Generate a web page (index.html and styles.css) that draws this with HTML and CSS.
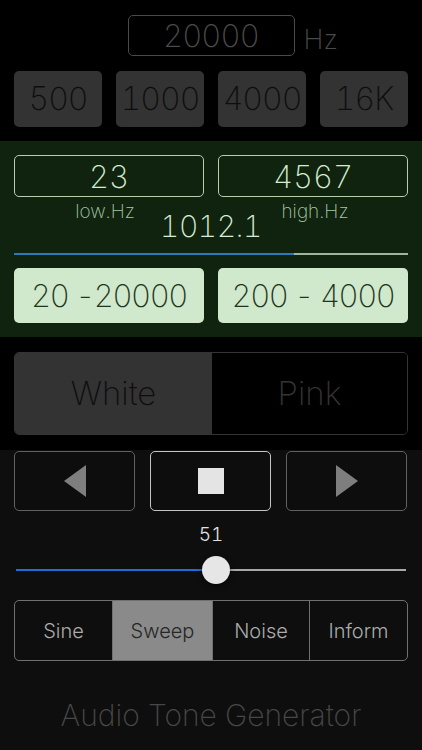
FILE: index.html
```html
<!DOCTYPE html>
<html>
<head>
<meta charset="utf-8">
<link rel="stylesheet" href="styles.css">
</head>
<body>
<div class="app">
  <section class="top">
    <div class="freq-row">
      <div class="freq-box">20000</div>
      <div class="hz">Hz</div>
    </div>
    <div class="presets">
      <div class="preset">500</div>
      <div class="preset">1000</div>
      <div class="preset">4000</div>
      <div class="preset">16K</div>
    </div>
  </section>

  <section class="sweep">
    <div class="pair">
      <div class="gbox">23</div>
      <div class="gbox">4567</div>
    </div>
    <div class="readout">
      <div class="lbl lbl-low">low.Hz</div>
      <div class="lbl lbl-high">high.Hz</div>
      <div class="value">1012.1</div>
    </div>
    <div class="gtrack"><div class="gfill" style="width:280px"></div></div>
    <div class="pair">
      <div class="range">20 -20000</div>
      <div class="range">200 - 4000</div>
    </div>
  </section>

  <section class="noise">
    <div class="wp">
      <div class="wp-seg wp-on">White</div>
      <div class="wp-seg wp-off">Pink</div>
    </div>
  </section>

  <section class="bottom">
    <div class="transport">
      <div class="tbtn">
        <svg width="22" height="32" viewBox="0 0 22 32"><polygon points="22,0 22,32 0,16" fill="#7e7e7e"/></svg>
      </div>
      <div class="tbtn tbtn-active">
        <div class="stop"></div>
      </div>
      <div class="tbtn">
        <svg width="22" height="32" viewBox="0 0 22 32"><polygon points="0,0 22,16 0,32" fill="#7e7e7e"/></svg>
      </div>
    </div>
    <div class="vol">51</div>
    <div class="vslider">
      <div class="vtrack"><div class="vfill" style="width:200px"></div></div>
      <div class="thumb" style="left:186px"></div>
    </div>
    <div class="modes">
      <div class="mode">Sine</div>
      <div class="mode mode-on">Sweep</div>
      <div class="mode">Noise</div>
      <div class="mode">Inform</div>
    </div>
    <div class="title">Audio Tone Generator</div>
  </section>
</div>
</body>
</html>
```

FILE: styles.css
```css
* { box-sizing: border-box; }
html, body { margin: 0; padding: 0; background: #000; }
body {
  width: 422px;
  height: 750px;
  overflow: hidden;
  font-family: Inter, "Helvetica Neue", Roboto, "Liberation Sans", sans-serif;
  font-weight: 200;
  font-variant-numeric: tabular-nums;
}
.app { display: flex; flex-direction: column; height: 750px; }

/* top */
.top { height: 141px; padding: 15px 14px 0; background: #000; }
.freq-row {
  display: grid;
  grid-template-columns: 1fr 167px 1fr;
  height: 41px;
}
.freq-box {
  grid-column: 2;
  border: 1px solid #4a4a4a;
  border-radius: 5px;
  display: flex; align-items: center; justify-content: center;
  color: #4a4a4a;
  font-size: 31px;
  line-height: 1;
  letter-spacing: -0.8px;
}
.hz {
  grid-column: 3;
  align-self: end;
  margin-left: 9px;
  margin-bottom: 3px;
  color: #4a4a4a;
  font-size: 27px;
  line-height: 1;
}
.presets {
  display: grid;
  grid-template-columns: repeat(4, 88px);
  gap: 14px;
  margin-top: 15px;
}
.preset {
  height: 56px;
  background: #333;
  border-radius: 5px;
  display: flex; align-items: center; justify-content: center;
  color: #0e0e0e;
  font-size: 32px;
  line-height: 1;
  letter-spacing: -1px;
}

/* green sweep section */
.sweep {
  height: 196px;
  background: #0f230f;
  padding: 14px 14px 0;
}
.pair {
  display: grid;
  grid-template-columns: 190px 190px;
  gap: 14px;
}
.gbox {
  height: 42px;
  border: 1px solid #b4d0b0;
  border-radius: 5px;
  display: flex; align-items: center; justify-content: center;
  color: #d4ecd0;
  font-size: 31px;
  line-height: 1;
}
.readout {
  display: grid;
  grid-template-columns: 190px 190px;
  column-gap: 14px;
  height: 44px;
  margin-top: 4px;
}
.lbl {
  grid-row: 1;
  justify-self: center;
  align-self: start;
  color: #a9c6a5;
  font-size: 19px;
  line-height: 22px;
}
.lbl-low { grid-column: 1; margin-right: 8px; }
.lbl-high { grid-column: 2; margin-left: 4px; }
.value {
  grid-row: 1;
  grid-column: 1 / 3;
  justify-self: center;
  align-self: end;
  color: #d8ecd4;
  font-size: 30px;
  line-height: 31px;
  margin-bottom: 3px;
  letter-spacing: -0.5px;
}
.gtrack {
  height: 2px;
  margin-top: 8px;
  background: #9fb59c;
}
.gfill { height: 2px; background: #2a79c0; }
.range {
  margin-top: 13px;
  height: 55px;
  background: #d0e8cc;
  border-radius: 5px;
  display: flex; align-items: center; justify-content: center;
  color: #1d361d;
  font-size: 31px;
  line-height: 1;
  letter-spacing: -1.4px;
}

/* white / pink */
.noise { height: 113px; padding: 15px 14px 0; background: #000; }
.wp {
  display: grid;
  grid-template-columns: 197px 1fr;
  height: 83px;
  border: 1px solid #343434;
  border-radius: 5px;
  overflow: hidden;
}
.wp-seg {
  display: flex; align-items: center; justify-content: center;
  font-size: 33px;
  line-height: 1;
}
.wp-on { background: #333; color: #0e0e0e; }
.wp-off { background: #000; color: #343434; }

/* bottom */
.bottom {
  flex: 1;
  background: #0e0e0e;
  padding: 1px 14px 0;
}
.transport {
  display: grid;
  grid-template-columns: repeat(3, 121px);
  gap: 15px;
}
.tbtn {
  height: 60px;
  border: 1px solid #606060;
  border-radius: 5px;
  background: #0d0d0d;
  display: flex; align-items: center; justify-content: center;
}
.tbtn-active { border-color: #c4c4c4; }
.stop { width: 26px; height: 26px; background: #e4e4e4; }
.vol {
  margin-top: 13px;
  text-align: center;
  color: #e2e2e2;
  font-size: 19px;
  line-height: 22px;
  font-weight: 300;
}
.vslider {
  position: relative;
  height: 50px;
  margin: 0 2px;
}
.vtrack {
  position: absolute;
  left: 0; right: 0; top: 23px;
  height: 2px;
  background: #a8a8a8;
}
.vfill { height: 2px; background: #1d6fd6; }
.thumb {
  position: absolute;
  top: 10px;
  width: 28px; height: 28px;
  border-radius: 50%;
  background: #e6e6e6;
  box-shadow: 0 2px 5px rgba(0,0,0,0.6);
}
.modes {
  margin-top: 4px;
  display: grid;
  grid-template-columns: 97px 100px 97px 1fr;
  height: 61px;
  border: 1px solid #707070;
  border-radius: 5px;
  overflow: hidden;
}
.mode {
  display: flex; align-items: center; justify-content: center;
  color: #ababab;
  font-size: 20px;
  line-height: 1;
  font-weight: 300;
  border-left: 1px solid #707070;
}
.mode:first-child { border-left: none; }
.mode-on { background: #8a8a8a; color: #262626; }
.title {
  margin-top: 37px;
  text-align: center;
  color: #474747;
  font-size: 30px;
  line-height: 34px;
}
```
